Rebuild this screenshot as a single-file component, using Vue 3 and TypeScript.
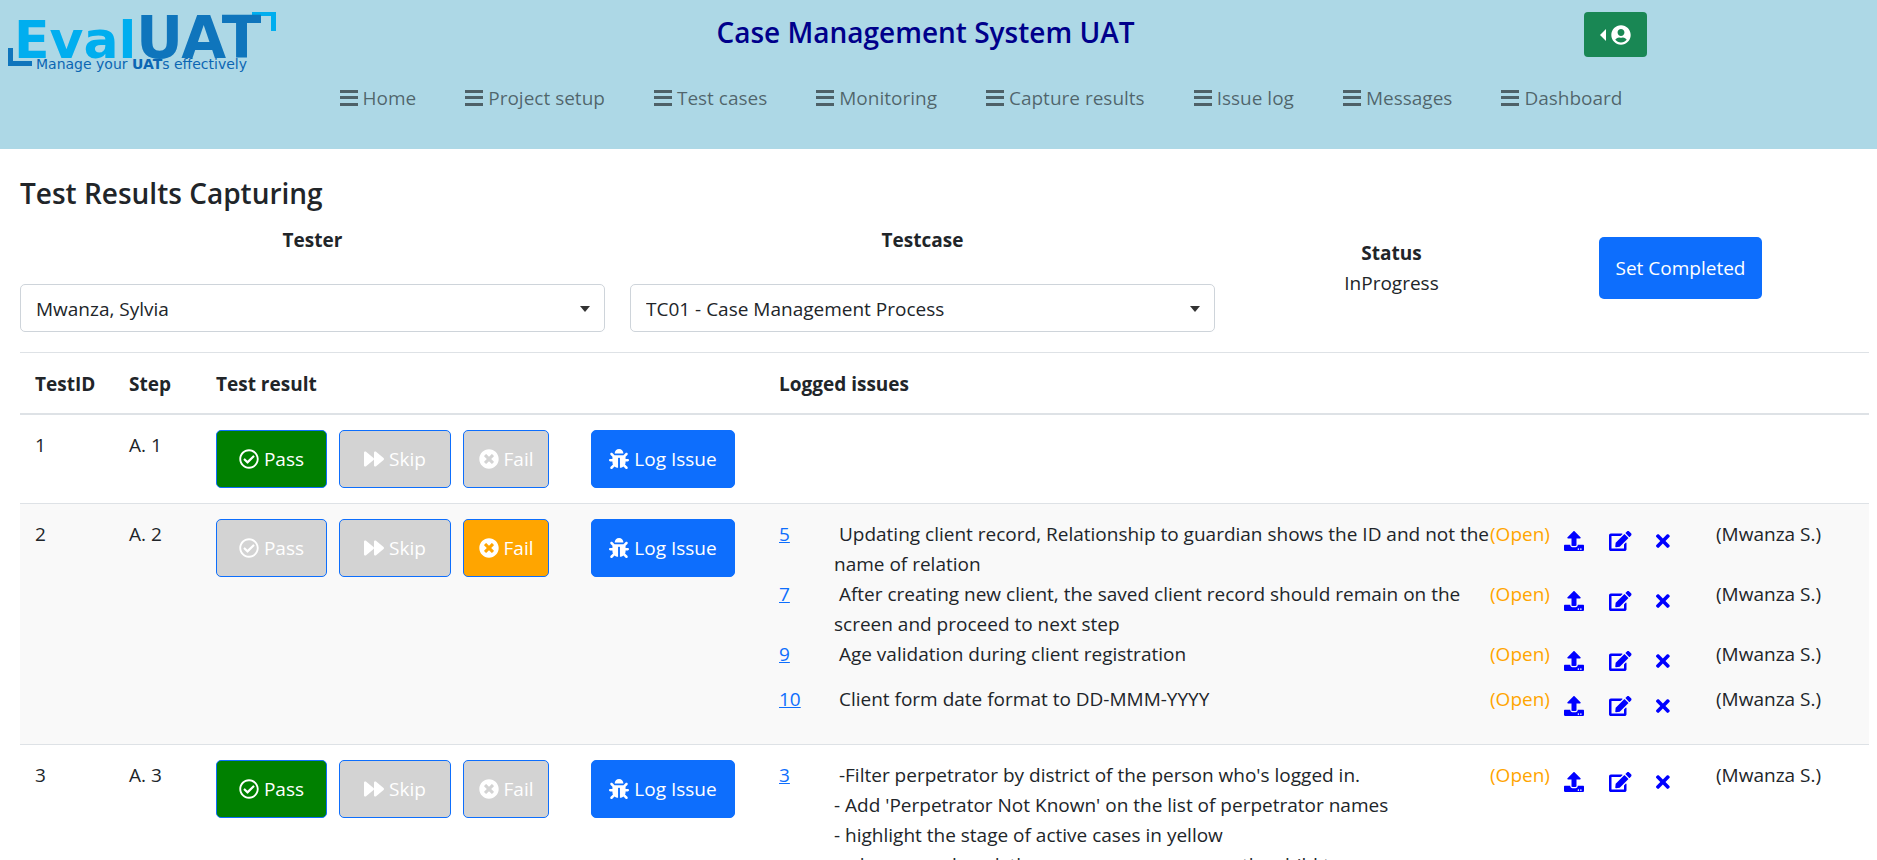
<script setup lang="ts">
import { ref } from 'vue'

type Result = 'pass' | 'skip' | 'fail'

interface Issue {
  id: number
  text: string
  owner: string
}

interface TestRow {
  id: number
  step: string
  result: Result
  issues: Issue[]
}

interface Icon {
  box: string
  d: string
}

const icons: Record<string, Icon> = {
  pass: {
    box: '0 0 512 512',
    d: 'M256 8C119.033 8 8 119.033 8 256s111.033 248 248 248 248-111.033 248-248S392.967 8 256 8zm0 48c110.532 0 200 89.451 200 200 0 110.532-89.451 200-200 200-110.532 0-200-89.451-200-200 0-110.532 89.451-200 200-200m140.204 130.267l-22.536-22.718c-4.667-4.705-12.265-4.736-16.97-.068L215.346 303.697l-59.792-60.277c-4.667-4.705-12.265-4.736-16.97-.069l-22.719 22.536c-4.705 4.667-4.736 12.265-.068 16.971l90.781 91.516c4.667 4.705 12.265 4.736 16.97.068l172.589-171.204c4.704-4.668 4.734-12.266.067-16.971z',
  },
  skip: {
    box: '0 0 512 512',
    d: 'M500.5 231.4l-192-160C287.9 54.3 256 68.6 256 96v320c0 27.4 31.9 41.8 52.5 24.6l192-160c15.3-12.8 15.3-36.4 0-49.2zm-256 0l-192-160C31.9 54.3 0 68.6 0 96v320c0 27.4 31.9 41.8 52.5 24.6l192-160c15.3-12.8 15.3-36.4 0-49.2z',
  },
  fail: {
    box: '0 0 512 512',
    d: 'M256 8C119 8 8 119 8 256s111 248 248 248 248-111 248-248S393 8 256 8zm121.6 313.1c4.7 4.7 4.7 12.3 0 17L338 377.6c-4.7 4.7-12.3 4.7-17 0L256 312l-65.1 65.6c-4.7 4.7-12.3 4.7-17 0L134.4 338c-4.7-4.7-4.7-12.3 0-17l65.6-65-65.6-65.1c-4.7-4.7-4.7-12.3 0-17l39.6-39.6c4.7-4.7 12.3-4.7 17 0l65 65.7 65.1-65.6c4.7-4.7 12.3-4.7 17 0l39.6 39.6c4.7 4.7 4.7 12.3 0 17L312 256l65.6 65.1z',
  },
  bug: {
    box: '0 0 512 512',
    d: 'M511.988 288.9c-.478 17.43-15.217 31.1-32.653 31.1H424v16c0 21.864-4.882 42.584-13.6 61.145l60.228 60.228c12.496 12.497 12.496 32.758 0 45.255-12.498 12.497-32.759 12.496-45.256 0l-54.736-54.736C345.886 467.965 314.351 480 280 480V236c0-6.627-5.373-12-12-12h-24c-6.627 0-12 5.373-12 12v244c-34.351 0-65.886-12.035-90.636-32.108l-54.736 54.736c-12.498 12.497-32.759 12.496-45.256 0-12.496-12.497-12.496-32.758 0-45.255l60.228-60.228C92.882 378.584 88 357.864 88 336v-16H32.666C15.23 320 .491 306.33.013 288.9-.484 270.816 14.028 256 32 256h56v-58.745l-46.628-46.628c-12.496-12.497-12.496-32.758 0-45.255 12.498-12.497 32.758-12.497 45.256 0L141.255 160h229.489l54.627-54.627c12.498-12.497 32.758-12.497 45.256 0 12.496 12.497 12.496 32.758 0 45.255L424 197.255V256h56c17.972 0 32.484 14.816 31.988 32.9zM257 0c-61.856 0-112 50.144-112 112h224C369 50.144 318.856 0 257 0z',
  },
  upload: {
    box: '0 0 512 512',
    d: 'M296 384h-80c-13.3 0-24-10.7-24-24V192h-87.7c-17.8 0-26.7-21.5-14.1-34.1L242.3 5.7c7.5-7.5 19.8-7.5 27.3 0l152.2 152.2c12.6 12.6 3.7 34.1-14.1 34.1H320v168c0 13.3-10.7 24-24 24zm216-8v112c0 13.3-10.7 24-24 24H24c-13.3 0-24-10.7-24-24V376c0-13.3 10.7-24 24-24h136v8c0 30.9 25.1 56 56 56h80c30.9 0 56-25.1 56-56v-8h136c13.3 0 24 10.7 24 24zm-124 88c0-11-9-20-20-20s-20 9-20 20 9 20 20 20 20-9 20-20zm64 0c0-11-9-20-20-20s-20 9-20 20 9 20 20 20 20-9 20-20z',
  },
  edit: {
    box: '0 0 576 512',
    d: 'M402.6 83.2l90.2 90.2c3.8 3.8 3.8 10 0 13.8L274.4 405.6l-92.8 10.3c-12.4 1.4-22.9-9.1-21.5-21.5l10.3-92.8L388.8 83.2c3.8-3.8 10-3.8 13.8 0zm162-22.9l-48.8-48.8c-15.2-15.2-39.9-15.2-55.2 0l-35.4 35.4c-3.8 3.8-3.8 10 0 13.8l90.2 90.2c3.8 3.8 10 3.8 13.8 0l35.4-35.4c15.2-15.3 15.2-40 0-55.2zM384 346.2V448H64V128h229.8c3.2 0 6.2-1.3 8.5-3.5l40-40c7.6-7.6 2.2-20.5-8.5-20.5H48C21.5 64 0 85.5 0 112v352c0 26.5 21.5 48 48 48h352c26.5 0 48-21.5 48-48V306.2c0-10.7-12.9-16-20.5-8.5l-40 40c-2.2 2.3-3.5 5.3-3.5 8.5z',
  },
  remove: {
    box: '0 0 352 512',
    d: 'M242.72 256l100.07-100.07c12.28-12.28 12.28-32.19 0-44.48l-22.24-22.24c-12.28-12.28-32.19-12.28-44.48 0L176 189.28 75.93 89.21c-12.28-12.28-32.19-12.28-44.48 0L9.21 111.45c-12.28 12.28-12.28 32.19 0 44.48L109.28 256 9.21 356.07c-12.28 12.28-12.28 32.19 0 44.48l22.24 22.24c12.28 12.28 32.2 12.28 44.48 0L176 322.72l100.07 100.07c12.28 12.28 32.2 12.28 44.48 0l22.24-22.24c12.28-12.28 12.28-32.19 0-44.48L242.72 256z',
  },
}

const navItems = [
  'Home',
  'Project setup',
  'Test cases',
  'Monitoring',
  'Capture results',
  'Issue log',
  'Messages',
  'Dashboard',
]

const results: { key: Result; label: string }[] = [
  { key: 'pass', label: 'Pass' },
  { key: 'skip', label: 'Skip' },
  { key: 'fail', label: 'Fail' },
]

const actions = [
  { key: 'upload', label: 'Upload attachment' },
  { key: 'edit', label: 'Edit issue' },
  { key: 'remove', label: 'Remove issue' },
]

const tester = ref('Mwanza, Sylvia')
const testcase = ref('TC01 - Case Management Process')
const status = ref('InProgress')

const owner = 'Mwanza S.'
const rows = ref<TestRow[]>([
  { id: 1, step: 'A. 1', result: 'pass', issues: [] },
  {
    id: 2,
    step: 'A. 2',
    result: 'fail',
    issues: [
      {
        id: 5,
        text: 'Updating client record, Relationship to guardian shows the ID and not the name of relation',
        owner,
      },
      {
        id: 7,
        text: 'After creating new client, the saved client record should remain on the screen and proceed to next step',
        owner,
      },
      { id: 9, text: 'Age validation during client registration', owner },
      { id: 10, text: 'Client form date format to DD-MMM-YYYY', owner },
    ],
  },
  {
    id: 3,
    step: 'A. 3',
    result: 'pass',
    issues: [
      {
        id: 3,
        text: "-Filter perpetrator by district of the person who's logged in.\n- Add 'Perpetrator Not Known' on the list of perpetrator names\n- highlight the stage of active cases in yellow\n- when case closed, the manager can approve the child too",
        owner,
      },
    ],
  },
])
</script>

<template>
  <header class="header">
    <div class="brand-row">
      <a href="#" class="logo-link" aria-label="EvalUAT">
        <svg class="logo" viewBox="0 0 270 62">
          <path d="M0 36h5v13h19v5H0z" fill="#0f75bc" />
          <path d="M244 0h24v19h-5V4h-19z" fill="#00aeef" />
          <text x="6" y="46" class="logo-eval">Eval</text>
          <text x="128" y="46" class="logo-uat">UAT</text>
          <text x="28" y="57" class="logo-tag">Manage your <tspan class="logo-strong">UAT</tspan>s effectively</text>
        </svg>
      </a>
      <h1 class="title">Case Management System UAT</h1>
      <button type="button" class="account" aria-label="Account menu">
        <span class="caret-left"></span>
        <svg class="account-icon" viewBox="0 0 496 512">
          <path
            d="M248 8C111 8 0 119 0 256s111 248 248 248 248-111 248-248S385 8 248 8zm0 96c48.6 0 88 39.4 88 88s-39.4 88-88 88-88-39.4-88-88 39.4-88 88-88zm0 344c-58.7 0-111.3-26.6-146.5-68.2 18.8-35.4 55.6-59.8 98.5-59.8 2.4 0 4.8.4 7.1 1.1 13 4.2 26.6 6.9 40.9 6.9 14.3 0 28-2.7 40.9-6.9 2.3-.7 4.7-1.1 7.1-1.1 42.9 0 79.7 24.4 98.5 59.8C359.3 421.4 306.7 448 248 448z"
          />
        </svg>
      </button>
    </div>
    <nav class="nav">
      <a v-for="item in navItems" :key="item" href="#" class="nav-link">
        <svg class="bars" viewBox="0 0 18 16">
          <path d="M0 0h18v3H0zM0 6h18v3H0zM0 13h18v3H0z" />
        </svg>
        <span>{{ item }}</span>
      </a>
    </nav>
  </header>

  <main class="main">
    <h2 class="heading">Test Results Capturing</h2>

    <div class="filters">
      <div class="field">
        <label for="tester">Tester</label>
        <div class="select-wrap">
          <select id="tester" v-model="tester">
            <option>Mwanza, Sylvia</option>
          </select>
        </div>
      </div>
      <div class="field">
        <label for="testcase">Testcase</label>
        <div class="select-wrap">
          <select id="testcase" v-model="testcase">
            <option>TC01 - Case Management Process</option>
          </select>
        </div>
      </div>
      <div class="status">
        <strong>Status</strong>
        <span>{{ status }}</span>
      </div>
      <button type="button" class="complete" @click="status = 'Completed'">Set Completed</button>
    </div>

    <table class="results">
      <thead>
        <tr>
          <th class="col-id">TestID</th>
          <th class="col-step">Step</th>
          <th class="col-result">Test result</th>
          <th>Logged issues</th>
        </tr>
      </thead>
      <tbody>
        <tr v-for="row in rows" :key="row.id">
          <td>{{ row.id }}</td>
          <td>{{ row.step }}</td>
          <td>
            <div class="buttons">
              <button
                v-for="r in results"
                :key="r.key"
                type="button"
                class="btn"
                :class="['btn-' + r.key, { active: row.result === r.key }]"
                @click="row.result = r.key"
              >
                <svg class="icon" :viewBox="icons[r.key].box"><path :d="icons[r.key].d" /></svg>
                <span>{{ r.label }}</span>
              </button>
              <button type="button" class="btn btn-log">
                <svg class="icon" :viewBox="icons.bug.box"><path :d="icons.bug.d" /></svg>
                <span>Log Issue</span>
              </button>
            </div>
          </td>
          <td>
            <div v-for="issue in row.issues" :key="issue.id" class="issue">
              <a href="#" class="issue-id">{{ issue.id }}</a>
              <span class="issue-text">{{ issue.text }}</span>
              <span class="issue-state">(Open)</span>
              <button
                v-for="a in actions"
                :key="a.key"
                type="button"
                class="action"
                :aria-label="a.label"
              >
                <svg class="action-icon" :viewBox="icons[a.key].box"><path :d="icons[a.key].d" /></svg>
              </button>
              <span>({{ issue.owner }})</span>
            </div>
          </td>
        </tr>
      </tbody>
    </table>
  </main>
</template>

<style>
html {
  scrollbar-width: none;
}

body {
  margin: 0;
  background: #fff;
  color: #212529;
  font: 19px/30px 'Open Sans', 'Noto Sans', sans-serif;
}
</style>

<style scoped>
* {
  box-sizing: border-box;
}

button,
select {
  font: inherit;
  cursor: pointer;
}

svg {
  display: block;
  fill: currentColor;
}

.header {
  height: 149px;
  background: #add8e6;
}

.brand-row {
  display: grid;
  grid-template-columns: 1fr auto 1fr;
  align-items: start;
  padding: 12px 26px 0 0;
}

.logo-link {
  margin-left: 8px;
}

.logo {
  width: 270px;
  height: 62px;
  overflow: visible;
}

.logo-eval,
.logo-uat {
  font-family: 'DejaVu Sans', sans-serif;
  font-weight: 700;
}

.logo-eval {
  font-size: 52px;
  fill: #00aeef;
}

.logo-uat {
  font-size: 58px;
  fill: #0f75bc;
}

.logo-tag {
  font-family: 'DejaVu Sans', sans-serif;
  font-size: 14px;
  fill: #0b66b3;
}

.logo-strong {
  font-weight: 700;
}

.title {
  margin: 0;
  color: #00008b;
  font-size: 28px;
  font-weight: 600;
  line-height: 40px;
}

.account {
  display: flex;
  align-items: center;
  justify-content: center;
  gap: 5px;
  justify-self: end;
  width: 63px;
  height: 45px;
  margin-right: 204px;
  padding: 0;
  border: 0;
  border-radius: 4px;
  background: #198754;
  color: #fff;
}

.account-icon {
  width: 20px;
  height: 20px;
}

.caret-left {
  border: 6px solid transparent;
  border-right-color: #fff;
  border-left-width: 0;
}

.nav {
  display: flex;
  justify-content: center;
  gap: 49px;
  padding: 9px 0 0 85px;
}

.nav-link {
  display: flex;
  align-items: center;
  gap: 5px;
  color: rgba(0, 0, 0, 0.55);
  text-decoration: none;
}

.bars {
  width: 18px;
  height: 16px;
}

.main {
  padding: 24px 8px 0 20px;
}

.heading {
  margin: 0 0 12px;
  font-size: 28px;
  font-weight: 600;
  line-height: 40px;
}

.filters {
  display: grid;
  grid-template-columns: 585fr 585fr 303fr 225fr;
  gap: 25px;
  align-items: start;
  padding-right: 76px;
}

.field {
  display: grid;
  gap: 29px;
  text-align: center;
}

.field label {
  font-weight: 700;
}

.select-wrap {
  position: relative;
}

.select-wrap::after {
  content: '';
  position: absolute;
  top: 22px;
  right: 15px;
  border: 5px solid transparent;
  border-top: 6px solid #333;
  border-bottom-width: 0;
  pointer-events: none;
}

select {
  appearance: none;
  width: 100%;
  height: 48px;
  padding: 1px 40px 0 15px;
  border: 1px solid #ced4da;
  border-radius: 5px;
  background: #fff;
  color: #212529;
}

.status {
  display: grid;
  padding-top: 13px;
  text-align: center;
}

.complete {
  justify-self: center;
  height: 62px;
  margin-top: 12px;
  padding: 0 17px;
  border: 0;
  border-radius: 5px;
  background: #0d6efd;
  color: #fff;
}

.results {
  width: 100%;
  margin-top: 20px;
  border-spacing: 0;
  border-top: 1px solid #dee2e6;
}

th {
  padding: 16px 15px 14px;
  border-bottom: 2px solid #dee2e6;
  text-align: left;
}

.col-id {
  width: 94px;
}

.col-step {
  width: 87px;
}

.col-result {
  width: 563px;
}

td {
  padding: 15px;
  border-bottom: 1px solid #dee2e6;
  vertical-align: top;
}

tbody tr:nth-child(even) td {
  background: #f9f9f9;
}

.buttons {
  display: flex;
}

.btn {
  display: flex;
  align-items: center;
  justify-content: center;
  gap: 5px;
  width: 111px;
  height: 58px;
  margin-right: 12px;
  padding: 0;
  border: 1px solid #0d6efd;
  border-radius: 5px;
  background: #d3d3d3;
  color: #fff;
}

.btn-skip {
  width: 112px;
}

.btn-fail {
  width: 86px;
  margin-right: 42px;
}

.btn-pass.active {
  background: #008000;
}

.btn-skip.active,
.btn-fail.active {
  background: #ffa500;
}

.btn-log {
  width: 144px;
  margin-right: 0;
  background: #0d6efd;
}

.icon {
  width: 20px;
  height: 20px;
}

.issue {
  display: grid;
  grid-template-columns: 55px minmax(0, 1fr) 74px 45px 47px 60px 138px;
  align-items: start;
  min-height: 45px;
}

.issue-id {
  color: #0d6efd;
}

.issue-text {
  white-space: pre-line;
}

.issue-text::before {
  content: '\00a0';
}

.issue-state {
  color: #ffa500;
}

.action {
  justify-self: start;
  padding: 12px 0 0;
  border: 0;
  background: none;
  color: #00f;
}

.action-icon {
  height: 20px;
}
</style>
